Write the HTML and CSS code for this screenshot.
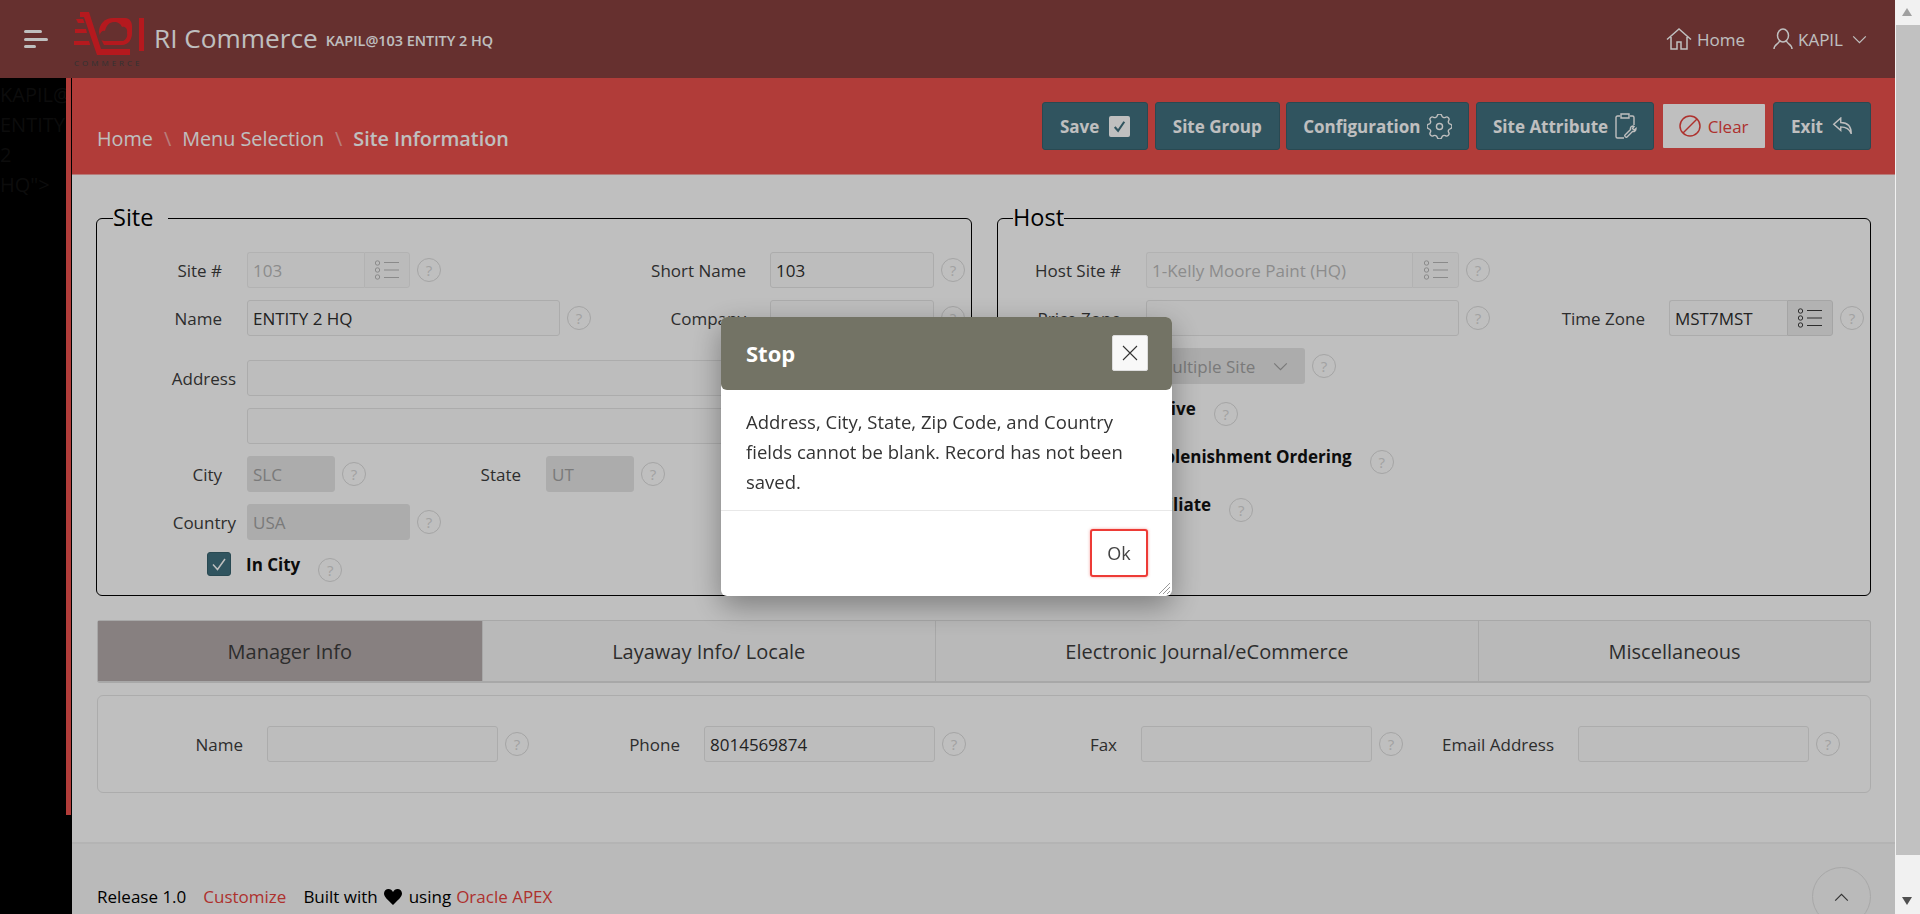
FILE: index.html
```html
<!DOCTYPE html>
<html lang="en">
<head>
  <meta charset="UTF-8" />
  <title>Site Information</title>
  <link rel="stylesheet" href="styles.css">
</head>
<body>
  <svg class="sprites" width="0" height="0">
    <symbol id="i-list" viewBox="0 0 24 20">
      <circle cx="2.500" cy="3" r="2.200" fill="none" stroke="currentColor" stroke-width="1"/>
      <circle cx="2.500" cy="10" r="2.200" fill="none" stroke="currentColor" stroke-width="1"/>
      <circle cx="2.500" cy="17" r="2.200" fill="none" stroke="currentColor" stroke-width="1"/>
      <path d="M9 2.500h15M9 10h15M9 17.500h15" fill="none" stroke="currentColor" stroke-width="1.200"/>
    </symbol>
    <symbol id="i-chevron" viewBox="0 0 16 10">
      <path d="M1 1.500l7 7 7-7" fill="none" stroke="currentColor" stroke-width="1.400"/>
    </symbol>
  </svg>

  <div class="page">
    <header class="topbar">
      <button class="menu-btn" type="button"><span></span><span></span><span></span></button>
      <div class="logo">
        <svg class="logo-mark" viewBox="0 0 70 45" width="70" height="45">
          <path d="M25 20c0-8 6-14 14-14h12c5 0 7 4 7 9v6c0 7-4 12-10 12H30l-3-6z" fill="#f22229"/>
          <path d="M31 29c-4 0-6-3-5-6 0-3 3-5 5-4 1-5 4-9 9-9 4 0 7 2 8 5 3-1 6 2 5 6 1 3-1 7-4 8z" fill="#88403f"/>
          <path d="M6 0h9l12 37h29v6H23L10 5H6z" fill="#f22229"/>
          <path d="M2 7h7l1.500 4H4zM1 17h11l1 4H1zM0 29h15l1.200 4H0z" fill="#f22229"/>
          <path d="M65 6h5v33h-5z" fill="#f22229"/>
        </svg>
        <span class="logo-text">COMMERCE</span>
      </div>
      <span class="app-name">RI Commerce</span>
      <span class="app-user">KAPIL@103 ENTITY 2 HQ</span>
      <nav class="top-nav">
        <a class="top-link">
          <svg viewBox="0 0 26 22" width="26" height="22" fill="none" stroke="currentColor" stroke-width="1.500"><path d="M1 11.500L13 1l12 10.500M5 9v12h6v-7h4v7h6V9"/></svg>
          Home
        </a>
        <a class="top-link top-user">
          <svg viewBox="0 0 20 22" width="20" height="22" fill="none" stroke="currentColor" stroke-width="1.500"><path d="M10 1a5.500 6.500 0 0 1 0 13 5.500 6.500 0 0 1 0-13zM6.500 13C6 16 1 16 1 21M13.500 13c.5 3 5.500 3 5.500 8"/></svg>
          KAPIL
          <svg class="top-chev" width="15" height="9"><use href="#i-chevron"/></svg>
        </a>
      </nav>
    </header>

    <div class="layout">
      <aside class="sidebar">
        <div class="sidebar-strip">KAPIL@ ENTITY 2 HQ"&gt;</div>
      </aside>

      <main class="main">
        <div class="banner">
          <div class="crumbs">
            <a>Home</a><i>\</i><a>Menu Selection</a><i>\</i><b>Site Information</b>
          </div>
          <div class="actions">
            <button class="btn btn-save" type="button">Save
              <svg viewBox="0 0 22 22" width="21" height="21"><rect width="22" height="22" rx="2" fill="#fff"/><path d="M6 11.500l3.500 4L16 6" fill="none" stroke="#41717f" stroke-width="2.200"/></svg>
            </button>
            <button class="btn" type="button">Site Group</button>
            <button class="btn btn-slim" type="button">Configuration
              <svg viewBox="3 3 18 18" width="25" height="25" fill="none" stroke="currentColor" stroke-width="1"><path d="M10.325 4.317c.426-1.756 2.924-1.756 3.350 0a1.724 1.724 0 002.573 1.066c1.543-.94 3.310.826 2.370 2.370a1.724 1.724 0 001.065 2.572c1.756.426 1.756 2.924 0 3.350a1.724 1.724 0 00-1.066 2.573c.94 1.543-.826 3.310-2.370 2.370a1.724 1.724 0 00-2.572 1.065c-.426 1.756-2.924 1.756-3.350 0a1.724 1.724 0 00-2.573-1.066c-1.543.94-3.310-.826-2.370-2.370a1.724 1.724 0 00-1.065-2.572c-1.756-.426-1.756-2.924 0-3.350a1.724 1.724 0 001.066-2.573c-.94-1.543.826-3.310 2.370-2.370.996.608 2.296.07 2.572-1.065z"/><circle cx="12" cy="12" r="2.200"/></svg>
            </button>
            <button class="btn btn-slim" type="button">Site Attribute
              <svg viewBox="0 0 22 26" width="22" height="26" fill="none" stroke="currentColor" stroke-width="1.400"><path d="M5 3H2.500Q1 3 1 4.500v19Q1 25 2.500 25H9M15 3h2.500Q19 3 19 4.500V12"/><path d="M6 1h8v4H6z"/><path d="M18 13c-2 0-3 2-2.500 3.500L10 22c-1 1 1 3 2 2l5.500-5.500c2 .5 3.500-1 3.500-3l-2 1.500-1.500-1.500 1.500-2z"/></svg>
            </button>
            <button class="btn btn-clear" type="button">
              <svg viewBox="0 0 22 22" width="22" height="22" fill="none" stroke="currentColor" stroke-width="1.500"><circle cx="11" cy="11" r="10"/><path d="M4 18L18 4"/></svg>
              Clear
            </button>
            <button class="btn btn-exit" type="button">Exit
              <svg viewBox="0 0 24 20" width="21" height="18" fill="none" stroke="currentColor" stroke-width="1.600"><path d="M10 1L2 8l8 7v-4c6 0 10 2 12 8 0-8-4-13-12-13z"/></svg>
            </button>
          </div>
        </div>

        <div class="content">
          <div class="forms">
            <fieldset class="box box-site">
              <legend>Site</legend>
              <div class="row">
                <label class="lbl">Site #</label>
                <div class="popup popup-site"><input class="field field-ro" value="103" disabled><span class="popup-btn"><svg width="24" height="20"><use href="#i-list"/></svg></span></div>
                <span class="help">?</span>
                <label class="lbl lbl-short">Short Name</label>
                <input class="field field-short" value="103">
                <span class="help">?</span>
              </div>
              <div class="row row-gap">
                <label class="lbl">Name</label>
                <input class="field field-name" value="ENTITY 2 HQ">
                <span class="help">?</span>
                <label class="lbl lbl-company">Company</label>
                <input class="field field-short">
                <span class="help">?</span>
              </div>
              <div class="row">
                <label class="lbl lbl-tight">Address</label>
                <input class="field field-address">
              </div>
              <div class="row">
                <label class="lbl"></label>
                <input class="field field-address">
              </div>
              <div class="row">
                <label class="lbl">City</label>
                <input class="field field-off field-city" value="SLC" disabled>
                <span class="help">?</span>
                <label class="lbl lbl-state">State</label>
                <input class="field field-off field-city" value="UT" disabled>
                <span class="help">?</span>
              </div>
              <div class="row">
                <label class="lbl lbl-tight">Country</label>
                <input class="field field-off field-country" value="USA" disabled>
                <span class="help">?</span>
              </div>
              <div class="check-row check-site">
                <span class="check"><svg viewBox="0 0 24 24" width="24" height="24"><path d="M6 12.500l4.500 5L18 7" fill="none" stroke="#fff" stroke-width="1.500"/></svg></span>
                <label class="check-lbl">In City</label>
                <span class="help">?</span>
              </div>
            </fieldset>

            <fieldset class="box box-host">
              <legend>Host</legend>
              <div class="row">
                <label class="lbl lbl-host">Host Site #</label>
                <div class="popup popup-host"><input class="field field-ro" value="1-Kelly Moore Paint (HQ)" disabled><span class="popup-btn popup-btn-host"><svg width="24" height="20"><use href="#i-list"/></svg></span></div>
                <span class="help">?</span>
              </div>
              <div class="row">
                <label class="lbl lbl-host">Price Zone</label>
                <input class="field field-price">
                <span class="help">?</span>
                <label class="lbl lbl-time">Time Zone</label>
                <div class="popup popup-time"><input class="field" value="MST7MST"><span class="popup-btn popup-btn-time"><svg width="24" height="20"><use href="#i-list"/></svg></span></div>
                <span class="help">?</span>
              </div>
              <div class="row">
                <label class="lbl lbl-host">Site Type</label>
                <div class="select-box">Multiple Site<svg width="15" height="9"><use href="#i-chevron"/></svg></div>
                <span class="help">?</span>
              </div>
              <div class="check-row check-host">
                <span class="check"></span>
                <label class="check-lbl">Active</label>
                <span class="help">?</span>
              </div>
              <div class="check-row check-host">
                <span class="check"></span>
                <label class="check-lbl">Replenishment Ordering</label>
                <span class="help">?</span>
              </div>
              <div class="check-row check-host">
                <span class="check"></span>
                <label class="check-lbl">Affiliate</label>
                <span class="help">?</span>
              </div>
            </fieldset>
          </div>

          <div class="tabs">
            <a class="tab active">Manager Info</a>
            <a class="tab">Layaway Info/ Locale</a>
            <a class="tab">Electronic Journal/eCommerce</a>
            <a class="tab">Miscellaneous</a>
          </div>

          <div class="panel">
            <div class="panel-col panel-col-first">
              <label class="lbl lbl-panel">Name</label>
              <input class="field field-panel">
              <span class="help">?</span>
            </div>
            <div class="panel-col">
              <label class="lbl lbl-panel">Phone</label>
              <input class="field field-panel" value="8014569874">
              <span class="help">?</span>
            </div>
            <div class="panel-col">
              <label class="lbl lbl-panel">Fax</label>
              <input class="field field-panel">
              <span class="help">?</span>
            </div>
            <div class="panel-col">
              <label class="lbl lbl-panel">Email Address</label>
              <input class="field field-panel">
              <span class="help">?</span>
            </div>
          </div>
        </div>

        <footer class="footer">
          <div class="footer-text">
            <span>Release 1.0</span>
            <a class="footer-custom">Customize</a>
            <span class="footer-built">Built with <svg viewBox="0 0 18 16" width="18" height="16"><path d="M9 16C4 11 0 8 0 4.500 0 2 2 0 4.500 0 6.500 0 8 1 9 3c1-2 2.500-3 4.500-3C16 0 18 2 18 4.500 18 8 14 11 9 16z"/></svg> using</span>
            <a class="footer-link">Oracle APEX</a>
          </div>
          <button class="to-top" type="button"><svg viewBox="0 0 16 10" width="15" height="9"><path d="M1 8.500l7-7 7 7" fill="none" stroke="currentColor" stroke-width="1.300"/></svg></button>
        </footer>
      </main>
    </div>

    <div class="overlay"></div>

    <div class="dialog">
      <div class="dialog-head">
        <span class="dialog-title">Stop</span>
        <button class="dialog-close" type="button"><svg viewBox="0 0 16 16" width="16" height="16"><path d="M1 1l14 14M15 1L1 15" stroke="#333" stroke-width="1.100"/></svg></button>
      </div>
      <div class="dialog-body">Address, City, State, Zip Code, and Country fields cannot be blank. Record has not been saved.</div>
      <div class="dialog-foot">
        <button class="dialog-ok" type="button">Ok</button>
        <svg class="dialog-grip" viewBox="0 0 12 12" width="12" height="12"><path d="M1 12L12 1M5 12l7-7M9 12l3-3" stroke="#999" stroke-width="1"/></svg>
      </div>
    </div>
  </div>

  <div class="scrollbar">
    <span class="arrow arrow-up"></span>
    <span class="thumb"></span>
    <span class="arrow arrow-down"></span>
  </div>
</body>
</html>
```

FILE: styles.css
```css
* {
  box-sizing: border-box;
}
body {
  margin: 0;
  height: 100vh;
  display: flex;
  overflow: hidden;
  font-family: "Open Sans", Arial, sans-serif;
  font-size: 17px;
  color: #3c3c3c;
  background-color: #fff;
}
.sprites {
  position: absolute;
}
button {
  font-family: inherit;
  cursor: pointer;
}
.page {
  flex: 1;
  min-width: 0;
  display: flex;
  flex-direction: column;
}

/* top bar */
.topbar {
  height: 78px;
  flex: none;
  display: flex;
  align-items: center;
  background-color: #88403f;
  color: #fff;
  padding-right: 28px;
}
.menu-btn {
  width: 24px;
  height: 18px;
  margin-left: 24px;
  padding: 0;
  border: none;
  background: none;
  display: flex;
  flex-direction: column;
  justify-content: space-between;
}
.menu-btn span {
  display: block;
  height: 3px;
  background-color: #fff;
  border-radius: 2px;
  width: 18px;
}
.menu-btn span:nth-child(2) {
  width: 24px;
}
.menu-btn span:nth-child(3) {
  width: 12px;
}
.logo {
  width: 72px;
  margin-left: 26px;
  margin-top: 2px;
  display: flex;
  flex-direction: column;
}
.logo-mark {
  display: block;
}
.logo-text {
  font-size: 8px;
  line-height: 11px;
  letter-spacing: 3px;
  color: #444;
  white-space: nowrap;
}
.app-name {
  margin-left: 8px;
  margin-top: -3px;
  font-size: 26.200px;
  font-weight: 500;
}
.app-user {
  margin-left: 8px;
  margin-top: 3px;
  font-size: 14.400px;
  font-weight: 600;
}
.top-nav {
  margin-left: auto;
  display: flex;
  align-items: center;
  gap: 28px;
}
.top-link {
  display: flex;
  align-items: center;
  gap: 5px;
  font-size: 17px;
}
.top-chev {
  margin-left: 4px;
}

/* sidebar */
.layout {
  flex: 1;
  min-height: 0;
  display: flex;
}
.sidebar {
  width: 72px;
  flex: none;
  background-color: #000;
}
.sidebar-strip {
  height: 737px;
  padding-top: 2px;
  border-right: 5px solid #ed514c;
  overflow: hidden;
  color: #111;
  font-size: 20px;
  line-height: 30px;
  width: 71px;
}

/* banner with actions */
.main {
  flex: 1;
  min-width: 0;
  display: flex;
  flex-direction: column;
}
.banner {
  height: 97px;
  flex: none;
  display: flex;
  justify-content: space-between;
  padding: 24px 24px 0 25px;
  background-color: #ed514c;
  border-bottom: 1px solid #f5a5a2;
}
.crumbs {
  margin-top: 23px;
  font-size: 19.800px;
  line-height: 28px;
  color: #fff;
  white-space: nowrap;
}
.crumbs i {
  font-style: normal;
  margin: 0 11px;
  opacity: 0.5;
}
.crumbs b {
  font-weight: 600;
}
.actions {
  display: flex;
  gap: 6.500px;
}
.btn {
  height: 48px;
  padding: 0 17px;
  display: flex;
  align-items: center;
  gap: 7px;
  background-color: #41717f;
  border: 1px solid #37626e;
  border-radius: 3px;
  color: #fff;
  font-size: 17px;
  font-weight: 700;
}
.btn-save {
  gap: 10px;
}
.btn-slim {
  padding: 0 16px;
}
.btn-exit {
  gap: 9px;
}
.btn-clear {
  padding: 0 16px;
  background-color: #fff;
  border: 2px solid #ed514c;
  color: #e8423d;
  font-weight: 400;
}

/* forms */
.content {
  padding: 0 24px 0 25px;
}
.forms {
  display: flex;
  justify-content: space-between;
  margin-top: 27px;
}
.box {
  margin: 0;
  padding: 18px 0 19px;
  border: 1px solid #000;
  border-radius: 6px;
  min-width: 0;
}
.box legend {
  margin-left: 16px;
  padding: 0 0 2px;
  font-size: 23.500px;
  line-height: 30px;
  color: #000;
}
.box-site {
  width: 876px;
  margin-left: -1px;
}
.box-site legend {
  padding-right: 15px;
}
.box-host {
  width: 874px;
}
.box-host legend {
  margin-left: 15px;
}
.row {
  display: flex;
  align-items: center;
  height: 36px;
  margin-bottom: 12px;
}
.row-gap {
  margin-bottom: 24px;
}
.lbl {
  flex: none;
  width: 125px;
  margin-right: 25px;
  text-align: right;
  white-space: nowrap;
}
.lbl-host {
  width: 123px;
}
.lbl-tight {
  width: 139px;
  margin-right: 11px;
}
.lbl-short {
  width: 305px;
  margin-right: 24px;
}
.lbl-company {
  width: 155px;
  margin-right: 24px;
}
.lbl-state {
  width: 155px;
  margin-right: 25px;
}
.lbl-time {
  width: 155px;
  margin-right: 24px;
}
.lbl-panel {
  width: 151px;
  margin-right: 24px;
}
.field {
  flex: none;
  height: 36px;
  padding: 0 5px;
  border: 1px solid #e6e6e6;
  border-radius: 3px;
  background-color: #fcfcfc;
  font: inherit;
  color: #2e2e2e;
  outline: none;
  min-width: 0;
}
.field-ro {
  background-color: #fdfdfd;
  border-color: #eee;
  color: #bbb;
}
.field-off {
  background-color: #e6e6e6;
  color: #a3a3a3;
}
.field-short {
  width: 164px;
}
.field-name {
  width: 313px;
}
.field-address {
  width: 640px;
}
.field-city {
  width: 88px;
}
.field-country {
  width: 163px;
}
.field-price {
  width: 313px;
}
.field-panel {
  width: 231px;
}
.popup {
  flex: none;
  display: flex;
  height: 36px;
}
.popup .field {
  flex: 1;
  border-radius: 3px 0 0 3px;
  border-right: none;
}
.popup-site {
  width: 163px;
}
.popup-host {
  width: 313px;
}
.popup-time {
  width: 164px;
}
.popup-btn {
  width: 46px;
  flex: none;
  display: flex;
  align-items: center;
  justify-content: center;
  border: 1px solid #eee;
  border-radius: 0 3px 3px 0;
  background-color: #fafafa;
  color: #b8b8b8;
}
.popup-btn-host {
  width: 47px;
}
.popup-btn-time {
  background-color: #eee;
  border-color: #ddd;
  color: #3c3c3c;
}
.help {
  flex: none;
  width: 24px;
  height: 24px;
  margin-left: 7px;
  display: flex;
  align-items: center;
  justify-content: center;
  border: 1.500px solid #dcdcdc;
  border-radius: 50%;
  font-size: 15px;
  color: #d8d8d8;
}
.select-box {
  flex: none;
  width: 159px;
  height: 36px;
  padding: 0 17px 0 11px;
  display: flex;
  align-items: center;
  justify-content: space-between;
  background-color: #e6e6e6;
  border-radius: 3px;
  color: #a3a3a3;
  white-space: nowrap;
}
.check-row {
  display: flex;
  align-items: flex-start;
  height: 24px;
  margin-bottom: 24px;
}
.check-row:last-child {
  margin-bottom: 0;
}
.check-site {
  padding-left: 110px;
}
.check-host {
  padding-left: 106px;
}
.check {
  width: 24px;
  height: 24px;
  flex: none;
  margin-right: 15px;
  background-color: #41717f;
  border: 1px solid #37626e;
  border-radius: 3px;
}
.check svg {
  display: block;
  margin: -1px;
}
.check-lbl {
  font-weight: 700;
  color: #111;
  line-height: 26px;
}
.check-row .help {
  margin-left: 18px;
  margin-top: 6px;
}

/* tabs */
.tabs {
  display: flex;
  height: 63px;
  margin-top: 24px;
  border: 1px solid #e0e0e0;
  border-bottom-width: 2px;
  border-radius: 3px;
  background-color: #f7f7f7;
}
.tab {
  flex: 1 1 auto;
  display: flex;
  align-items: center;
  justify-content: center;
  padding: 0 20px;
  font-size: 20px;
  border-left: 1px solid #e0e0e0;
  white-space: nowrap;
}
.tab:first-child {
  border-left: none;
}
.tab.active {
  background-color: #b5abab;
}
.panel {
  height: 98px;
  margin-top: 12px;
  padding-top: 30px;
  display: flex;
  border: 1px solid #e6e6e6;
  border-radius: 6px;
}
.panel-col {
  width: 437px;
  height: 36px;
  flex: none;
  display: flex;
  align-items: center;
}
.panel-col-first {
  margin-left: -6px;
}

/* footer */
.footer {
  flex: 1;
  margin-top: 49px;
  padding: 23px 24px 0 25px;
  display: flex;
  justify-content: space-between;
  align-items: flex-start;
  border-top: 2px solid #f0f0f0;
  background-color: #f8f8f8;
}
.footer-text {
  margin-top: 18px;
  display: flex;
  align-items: center;
  gap: 17px;
  color: #000;
  white-space: nowrap;
}
.footer-built svg {
  vertical-align: -2px;
  margin: 0 2px;
  fill: #000;
}
.footer-built {
  margin-right: -12px;
}
.footer-custom,
.footer-link {
  color: #e8423d;
}
.to-top {
  width: 59px;
  height: 59px;
  border: 1px solid #e0e0e0;
  border-radius: 50%;
  background: none;
  color: #444;
}

/* modal */
.overlay {
  position: fixed;
  top: 0;
  left: 0;
  bottom: 0;
  right: 25px;
  background-color: rgba(0, 0, 0, 0.25);
}
.dialog {
  position: fixed;
  left: 721px;
  top: 317px;
  width: 451px;
  height: 279px;
  display: flex;
  flex-direction: column;
  background-color: #fff;
  border-radius: 6px;
  box-shadow: 0 10px 30px rgba(0, 0, 0, 0.35);
}
.dialog-head {
  height: 73px;
  flex: none;
  display: flex;
  align-items: flex-start;
  justify-content: space-between;
  padding: 18px 24px 0;
  background-color: #737365;
  border-radius: 6px;
}
.dialog-title {
  margin-left: 1px;
  margin-top: -2px;
  font-size: 22px;
  line-height: 40px;
  font-weight: 700;
  color: #fff;
}
.dialog-close {
  width: 36px;
  height: 36px;
  display: flex;
  align-items: center;
  justify-content: center;
  padding: 0;
  border: 1px solid #ddd;
  border-radius: 2px;
  background-color: #f8f8f8;
}
.dialog-body {
  height: 121px;
  flex: none;
  padding: 17px 20px 0 25px;
  border-bottom: 1px solid #e8e8e8;
  font-size: 18.500px;
  line-height: 30px;
  color: #333;
}
.dialog-foot {
  flex: 1;
  position: relative;
  display: flex;
  justify-content: flex-end;
  padding: 18px 24px 0 0;
}
.dialog-ok {
  width: 58px;
  height: 48px;
  padding: 0;
  border: 2px solid #ed3b36;
  border-radius: 3px;
  background-color: #fff;
  box-shadow: 0 0 3px rgba(237, 59, 54, 0.5);
  font-size: 18px;
  color: #444;
}
.dialog-grip {
  position: absolute;
  right: 2px;
  bottom: 2px;
}

/* scrollbar */
.scrollbar {
  width: 25px;
  flex: none;
  display: flex;
  flex-direction: column;
  align-items: stretch;
  background-color: #f1f1f1;
}
.arrow {
  height: 25px;
  flex: none;
  position: relative;
}
.arrow::after {
  content: "";
  position: absolute;
  left: 7px;
  border-left: 5.500px solid transparent;
  border-right: 5.500px solid transparent;
}
.arrow-up::after {
  top: 8px;
  border-bottom: 8px solid #a0a0a0;
}
.arrow-down {
  margin-top: auto;
}
.arrow-down::after {
  top: 8px;
  border-top: 8px solid #505050;
}
.thumb {
  height: 830px;
  flex: none;
  margin-left: 1px;
  background-color: #c1c1c1;
}
```
